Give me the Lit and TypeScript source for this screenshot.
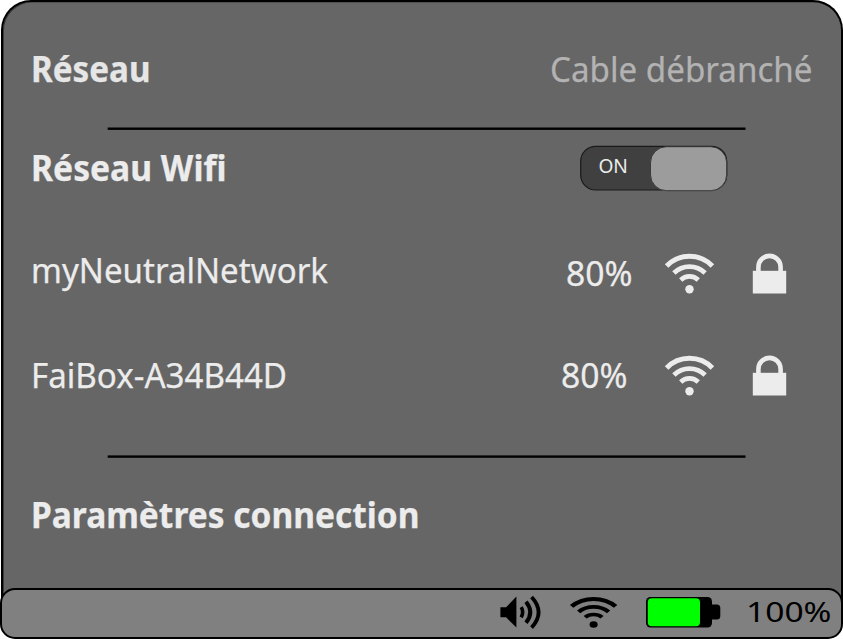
import { LitElement, html, svg, css } from "lit";
import { customElement, property } from "lit/decorators.js";

/** One line of text stretched to a given advance width. */
@customElement("fit-text")
class FitText extends LitElement {
  @property() text = "";
  @property({ type: Number }) length = 100;
  @property({ type: Number }) baseline = 30;
  @property({ type: Number }) size = 35;

  static styles = css`
    :host { display: block; flex: none; }
    svg { display: block; overflow: visible; height: 10px; }
    text {
      fill: currentColor; stroke: currentColor; stroke-width: var(--text-stroke, 0.25px);
      font-family: "Noto Sans", "Open Sans", sans-serif; font-weight: inherit;
    }
  `;

  render() {
    return html`<svg width=${this.length}>
      <text x="0" y=${this.baseline} font-size=${this.size} textLength=${this.length}
        lengthAdjust="spacingAndGlyphs">${this.text}</text>
    </svg>`;
  }
}

const wifi = svg`
  <path d="M2.1 12.2A32 32 0 0 1 47.9 12.2" stroke-width="5"/>
  <path d="M9.4 19.2A22.2 22.2 0 0 1 40.6 19.2" stroke-width="4.8"/>
  <path d="M16.2 26.2A12.6 12.6 0 0 1 33.8 26.2" stroke-width="4.6"/>
  <circle cx="25" cy="35.5" r="4.2"/>`;

interface Network { name: string; length: number; strength: string; cls: string; baseline: number; strengthBaseline: number; }

const networks: Network[] = [
  { name: "myNeutralNetwork", length: 297, strength: "80%", cls: "first", baseline: 59.4, strengthBaseline: 62.4 },
  { name: "FaiBox-A34B44D", length: 256, strength: "80%", cls: "second", baseline: 62.4, strengthBaseline: 62.2 },
];

@customElement("app-root")
class AppRoot extends LitElement {
  static styles = css`
    :host { display: block; width: 843px; height: 639px; background: #fff; overflow: hidden; }
    .screen { display: flex; flex-direction: column; height: 639px; }
    .panel {
      box-sizing: border-box; width: 842px; height: 620px; margin: 0 0 -32px 1px; flex: none;
      border: 2px solid #000; border-bottom: 0; border-radius: 30px 30px 0 0;
      background: #666; box-shadow: inset 1px 0.5px 0 #3a3a3a;
      color: #ececec; display: flex; flex-direction: column;
    }
    .row { display: flex; padding: 0 27px 0 27.7px; flex: none; }
    .between { justify-content: space-between; }
    .bold { font-weight: 700; }
    .wired { height: 125px; color: #e6e6e6; padding-right: 28.4px; }
    .status { color: #b3b3b3; }
    .rule { display: block; width: 639px; height: 4px; margin-left: 104px; flex: none; }
    .wireless { height: 93px; }
    .toggle { display: block; width: 149px; height: 48px; margin: 13px 86px 0 0; overflow: visible; }
    .toggle text { font-family: "Noto Sans", "Open Sans", sans-serif; }
    .network { height: 102px; }
    .readings { display: flex; }
    .wifi { display: block; fill: none; stroke: currentColor; overflow: visible; }
    .wifi circle { fill: currentColor; stroke: none; }
    .network .wifi { width: 50px; height: 40px; }
    .first .wifi { margin: 30px 38px 0 32px; }
    .second .wifi { margin: 30px 38px 0 37px; }
    .lock { display: block; width: 34px; height: 40px; margin-right: 27px; overflow: visible; }
    .first .lock { margin-top: 30px; }
    .second .lock { margin-top: 30px; }
    .gap { height: 27px; flex: none; }
    .settings { height: 129px; }
    .bar {
      position: relative; box-sizing: border-box; width: 843px; height: 51px; flex: none;
      border: 2px solid #000; border-radius: 15px; background: #808080; color: #000;
      display: flex; justify-content: flex-end; padding-right: 9.4px; --text-stroke: 0px;
    }
    .sound { display: block; width: 42px; height: 34px; margin: 5px 28px 0 0; }
    .bar .wifi { width: 48px; height: 31px; margin: 7px 28px 0 0; }
    .battery { display: block; width: 75px; height: 32px; margin: 6px 25px 0 0; }
  `;

  rule(y: number) {
    return html`<svg class="rule"><rect x="0.7" y=${y} width="637.8" height="2.4"/></svg>`;
  }

  network(n: Network) {
    return html`<div class="row between network ${n.cls}">
      <fit-text .text=${n.name} .length=${n.length} .baseline=${n.baseline}></fit-text>
      <div class="readings">
        <fit-text .text=${n.strength} .length=${66.6} .baseline=${n.strengthBaseline}></fit-text>
        <svg class="wifi" viewBox="0.5 0.2 50 40">${wifi}</svg>
        <svg class="lock" viewBox="0.6 0.2 34 40">
          <path d="M6 19V13.4A11 11.2 0 0 1 28.2 13.4V19" fill="none" stroke="currentColor" stroke-width="4.6"/>
          <rect x="0.4" y="17" width="33.4" height="22.7" fill="currentColor"/>
        </svg>
      </div>
    </div>`;
  }

  render() {
    return html`<div class="screen">
      <main class="panel">
        <div class="row between wired">
          <fit-text class="bold" text="Réseau" .length=${119.5} .baseline=${79.8}></fit-text>
          <fit-text class="status" text="Cable débranché" .length=${262.5} .baseline=${79.5}></fit-text>
        </div>
        ${this.rule(0.5)}
        <div class="row between wireless">
          <fit-text class="bold" text="Réseau Wifi" .length=${195.5} .baseline=${50}></fit-text>
          <svg class="toggle">
            <rect x="1.7" y="2.3" width="146" height="43.7" rx="15" fill="#404040" stroke="#1a1a1a" stroke-width="1.2"/>
            <rect x="71.5" y="2.7" width="76.2" height="44" rx="16" fill="#9c9c9c" stroke="#333" stroke-width="0.9"/>
            <text x="19.4" y="29.4" font-size="20" fill="#ececec" textLength="29.5" lengthAdjust="spacingAndGlyphs">ON</text>
          </svg>
        </div>
        ${networks.map((n) => this.network(n))}
        <div class="gap"></div>
        ${this.rule(0.4)}
        <div class="row settings">
          <fit-text class="bold" text="Paramètres connection" .length=${388.5} .baseline=${68.9}></fit-text>
        </div>
      </main>
      <footer class="bar">
        <svg class="sound" viewBox="0.4 0 42 34">
          <path d="M0.8 12.3H6.5L16.8 1.5V32.5L6.5 22.3H0.8Z"/>
          <path d="M21.6 12.2Q24.6 17.3 21.6 22.4" fill="none" stroke="#000" stroke-width="3.6"/>
          <path d="M26.4 6.8Q35 17.3 26.4 27.8" fill="none" stroke="#000" stroke-width="4"/>
          <path d="M32 2Q46 17.3 32 32.6" fill="none" stroke="#000" stroke-width="3.8"/>
        </svg>
        <svg class="wifi" viewBox="0.4 0 50 40" preserveAspectRatio="none">${wifi}</svg>
        <svg class="battery" viewBox="0 0 75 32">
          <rect x="0" y="1" width="66" height="30.6" rx="4.5"/>
          <rect x="62" y="8.5" width="12.3" height="15" rx="3.5"/>
          <rect x="1.8" y="2.2" width="52.2" height="28" rx="4" fill="#0f0"/>
        </svg>
        <fit-text text="100%" .length=${85.5} .baseline=${32} .size=${27.5}></fit-text>
      </footer>
    </div>`;
  }
}
